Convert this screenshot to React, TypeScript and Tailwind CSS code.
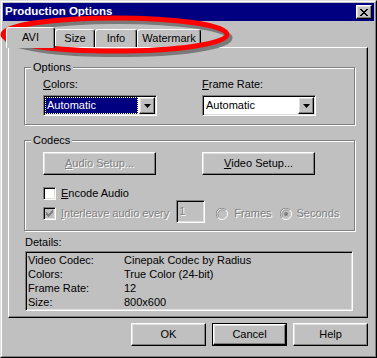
import React from 'react';

const raised =
  'border border-t-white border-l-white border-r-black border-b-black shadow-[inset_-1px_-1px_0_#808080,inset_1px_1px_0_#dfdfdf]';
const sunken =
  'border border-t-[#808080] border-l-[#808080] border-r-white border-b-white shadow-[inset_1px_1px_0_#000,inset_-1px_-1px_0_#dfdfdf] p-px';
const etched = 'border border-[#808080] shadow-[inset_1px_1px_0_#fff,1px_1px_0_#fff]';
const disabledText = 'text-[#808080] [text-shadow:1px_1px_0_#fff]';

const Mn: React.FC<{ c: string }> = ({ c }) => <span className="underline underline-offset-[1px]">{c}</span>;

const Arrow = () => (
  <div className={`${raised} w-[16px] h-[17px] bg-[#c0c0c0] flex items-center justify-center shrink-0`}>
    <svg width="7" height="4" viewBox="0 0 7 4">
      <path d="M0 0h7L3.5 4z" fill="#000" />
    </svg>
  </div>
);

const Combo: React.FC<{ focused?: boolean }> = ({ focused }) => (
  <div className={`${sunken} w-[114px] h-[21px] bg-white`}>
    <div className="flex h-full">
      <div className="flex-1 pr-px">
        {focused ? (
          <div className="h-[17px] bg-[#000080] text-white border border-dotted border-[#ffffa0] pl-[1px] leading-[15px]">
            Automatic
          </div>
        ) : (
          <div className="h-[17px] pl-[2px] leading-[17px]">Automatic</div>
        )}
      </div>
      <Arrow />
    </div>
  </div>
);

const Check: React.FC<{ checked?: boolean; disabled?: boolean }> = ({ checked, disabled }) => (
  <div
    className={`w-[13px] h-[13px] shrink-0 border border-t-[#808080] border-l-[#808080] border-r-white border-b-white shadow-[inset_1px_1px_0_#000,inset_-1px_-1px_0_#dfdfdf] flex items-center justify-center ${
      disabled ? 'bg-[#c0c0c0]' : 'bg-white'
    }`}
  >
    {checked && (
      <svg width="7" height="7" viewBox="0 0 7 7">
        <path d="M0 2h1v1h1v1h1V3h1V2h1V1h1V0h1v3H6v1H5v1H4v1H3v1H2V6H1V5H0z" fill={disabled ? '#808080' : '#000'} />
      </svg>
    )}
  </div>
);

const Radio: React.FC<{ on?: boolean }> = ({ on }) => (
  <svg width="12" height="12" viewBox="0 0 12 12" className="shrink-0">
    <circle cx="6" cy="6" r="5.5" fill="#c0c0c0" stroke="#fff" />
    <path d="M1.8 9.8A5.5 5.5 0 0 1 9.8 1.8" fill="none" stroke="#808080" />
    <path d="M2.8 8.8A4.3 4.3 0 0 1 8.8 2.8" fill="none" stroke="#808080" strokeOpacity="0.5" />
    {on && <circle cx="6" cy="6" r="2" fill="#808080" />}
  </svg>
);

const Tab: React.FC<{ label: string; w: string; active?: boolean }> = ({ label, w, active }) => (
  <div
    className={`${w} ${
      active ? 'h-[21px] relative z-10 bg-[#c0c0c0]' : 'h-[18px] mt-[2px]'
    } border-t border-l border-r border-t-white border-l-white border-r-black rounded-t-[3px] shadow-[inset_-1px_0_0_#808080] flex items-center justify-center ${
      active ? 'pb-[2px]' : ''
    }`}
  >
    {label}
  </div>
);

const Group: React.FC<{ title: string; className: string; children: React.ReactNode }> = ({ title, className, children }) => (
  <div className={`${etched} relative ${className}`}>
    <div className="absolute -top-[7px] left-[6px] bg-[#c0c0c0] px-[2px] leading-[13px]">{title}</div>
    {children}
  </div>
);

const details: [string, string][] = [
  ['Video Codec:', 'Cinepak Codec by Radius'],
  ['Colors:', 'True Color (24-bit)'],
  ['Frame Rate:', '12'],
  ['Size:', '800x600'],
];

export default function App() {
  return (
    <div className="w-[377px] h-[358px] bg-[#c0c0c0] relative font-['Liberation_Sans',Arial,sans-serif] text-[11px] text-black overflow-hidden">
      <div className="h-full border border-t-[#dfdfdf] border-l-[#dfdfdf] border-r-black border-b-black">
        <div className="h-full border border-t-white border-l-white border-r-[#808080] border-b-[#808080] p-px flex flex-col">
          {/* title bar */}
          <div className="h-[18px] bg-[#000080] flex items-center justify-between pl-[2px] pr-[2px] shrink-0">
            <span className="text-white font-bold text-[11.5px] leading-none">Production Options</span>
            <div className={`${raised} w-[16px] h-[14px] bg-[#c0c0c0] flex items-center justify-center`}>
              <svg width="8" height="7" viewBox="0 0 8 7">
                <path
                  d="M0 0h2v1h1v1h2V1h1V0h2v1H7v1H6v1H5v1h1v1h1v1h1v1H6V6H5V5H3v1H2v1H0V6h1V5h1V4h1V3H2V2H1V1H0z"
                  fill="#000"
                />
              </svg>
            </div>
          </div>

          {/* tabs */}
          <div className="flex items-start h-[20px] mt-[6px] ml-[3px] shrink-0">
            <Tab label="AVI" w="w-[49px]" active />
            <Tab label="Size" w="w-[40px]" />
            <Tab label="Info" w="w-[42px]" />
            <Tab label="Watermark" w="w-[64px]" />
          </div>

          {/* panel */}
          <div className="ml-[5px] w-[360px] h-[271px] shrink-0 border border-t-white border-l-white border-r-black border-b-black shadow-[inset_-1px_-1px_0_#808080] pl-[15px] pt-[19px]">
            <Group title="Options" className="w-[331px] h-[58px] pt-[10px] pl-[18px]">
              <div className="flex gap-[45px]">
                <div>
                  <div className="leading-[13px] mb-[4px]">
                    <Mn c="C" />olors:
                  </div>
                  <Combo focused />
                </div>
                <div>
                  <div className="leading-[13px] mb-[4px]">
                    <Mn c="F" />rame Rate:
                  </div>
                  <Combo />
                </div>
              </div>
            </Group>

            <Group title="Codecs" className="w-[331px] h-[91px] mt-[15px] pt-[11px] pl-[18px]">
              <div className="flex gap-[46px]">
                <div className={`${raised} w-[113px] h-[23px] flex items-center justify-center ${disabledText}`}>
                  <Mn c="A" />udio Setup...
                </div>
                <div className={`${raised} w-[113px] h-[23px] flex items-center justify-center`}>
                  <Mn c="V" />ideo Setup...
                </div>
              </div>
              <div className="flex items-center h-[13px] mt-[12px]">
                <Check />
                <span className="ml-[5px]">
                  <Mn c="E" />ncode Audio
                </span>
              </div>
              <div className="flex items-start h-[13px] mt-[7px]">
                <Check checked disabled />
                <span className={`ml-[5px] leading-[13px] ${disabledText}`}>
                  <Mn c="I" />nterleave audio every
                </span>
                <div className={`${sunken} -mt-[7px] ml-[7px] w-[29px] h-[23px] bg-[#c0c0c0] pl-[2px] leading-[19px] ${disabledText}`}>
                  1
                </div>
                <div className="flex items-center h-[13px] ml-[11px]">
                  <Radio />
                  <span className={`ml-[6px] ${disabledText}`}>Frames</span>
                  <span className="ml-[8px]">
                    <Radio on />
                  </span>
                  <span className={`ml-[5px] ${disabledText}`}>Seconds</span>
                </div>
              </div>
            </Group>

            <div className="mt-[5px] ml-px leading-[13px]">Details:</div>
            <div className="mt-[2px] ml-px w-[328px] h-[60px] border border-t-[#808080] border-l-[#808080] border-r-white border-b-white shadow-[inset_1px_1px_0_#000,inset_-1px_-1px_0_#dfdfdf] pt-px pl-[2px]">
              {details.map(([k, v]) => (
                <div key={k} className="flex leading-[14px]">
                  <span className="w-[96px]">{k}</span>
                  <span>{v}</span>
                </div>
              ))}
            </div>
          </div>

          {/* buttons */}
          <div className="ml-[5px] w-[360px] mt-[5px] flex justify-end gap-[6px] shrink-0">
            <div className={`${raised} w-[75px] h-[23px] flex items-center justify-center`}>OK</div>
            <div className="w-[75px] h-[23px] border border-black">
              <div className={`${raised} h-full flex items-center justify-center`}>Cancel</div>
            </div>
            <div className={`${raised} w-[75px] h-[23px] flex items-center justify-center`}>Help</div>
          </div>
        </div>
      </div>

      {/* red highlight ellipse drawn over the tabs */}
      <svg className="absolute inset-0 pointer-events-none" width="377" height="358" viewBox="0 0 377 358">
        <ellipse cx="118" cy="38" rx="112" ry="16.5" fill="none" stroke="#7a7a7a" strokeWidth="5" />
        <ellipse cx="115" cy="34.5" rx="112" ry="16.5" fill="none" stroke="#ff0000" strokeWidth="5" />
      </svg>
    </div>
  );
}
